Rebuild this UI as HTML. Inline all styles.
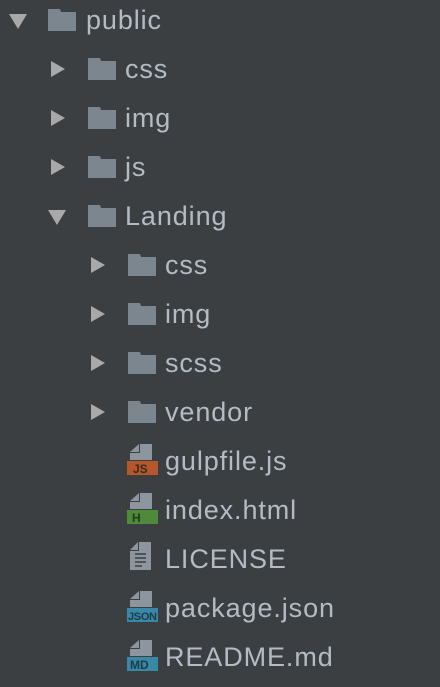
<!DOCTYPE html>
<html><head><style>
body{margin:0;width:440px;height:687px;background:#3c3f41;overflow:hidden;font-family:"Liberation Sans","DejaVu Sans",sans-serif;}
.r{position:absolute;height:49px;left:0;right:0;}
.t{position:absolute;font-size:27px;color:#b3bcc5;top:5px;letter-spacing:0.9px}
.tri{position:absolute;}
.fold{position:absolute;width:28px;height:22px}
</style></head><body>
<svg width="0" height="0" style="position:absolute"><defs>
<symbol id="fd" viewBox="0 0 28 22"><path d="M0 0H12L13 3H28V22H0Z" fill="#7b868e"/></symbol>
<symbol id="tr" viewBox="0 0 16 16"><path d="M1 0L15 8L1 16Z" fill="#a9a9a9"/></symbol>
<symbol id="td" viewBox="0 0 18 16"><path d="M0 1H18L9 16Z" fill="#a9a9a9"/></symbol>
<symbol id="pg" viewBox="0 0 22 16"><path d="M10 0H22V16H0V9H10Z" fill="#8d969e"/><path d="M0 8L9 0V8Z" fill="#8d969e"/></symbol>
</defs></svg>

<div class="r" style="top:0"><svg class="tri" style="left:9px;top:13px" width="18" height="16"><use href="#td"/></svg><svg class="fold" style="left:48px;top:9px" width="28" height="22"><use href="#fd"/></svg><span class="t" style="left:86px">public</span></div>
<div class="r" style="top:49px"><svg class="tri" style="left:50px;top:12px" width="16" height="16"><use href="#tr"/></svg><svg class="fold" style="left:88px;top:9px" width="28" height="22"><use href="#fd"/></svg><span class="t" style="left:125px">css</span></div>
<div class="r" style="top:98px"><svg class="tri" style="left:50px;top:12px" width="16" height="16"><use href="#tr"/></svg><svg class="fold" style="left:88px;top:9px" width="28" height="22"><use href="#fd"/></svg><span class="t" style="left:125px">img</span></div>
<div class="r" style="top:147px"><svg class="tri" style="left:50px;top:12px" width="16" height="16"><use href="#tr"/></svg><svg class="fold" style="left:88px;top:9px" width="28" height="22"><use href="#fd"/></svg><span class="t" style="left:125px">js</span></div>
<div class="r" style="top:196px"><svg class="tri" style="left:48px;top:13px" width="18" height="16"><use href="#td"/></svg><svg class="fold" style="left:88px;top:9px" width="28" height="22"><use href="#fd"/></svg><span class="t" style="left:125px">Landing</span></div>
<div class="r" style="top:245px"><svg class="tri" style="left:90px;top:12px" width="16" height="16"><use href="#tr"/></svg><svg class="fold" style="left:128px;top:9px" width="28" height="22"><use href="#fd"/></svg><span class="t" style="left:165px">css</span></div>
<div class="r" style="top:294px"><svg class="tri" style="left:90px;top:12px" width="16" height="16"><use href="#tr"/></svg><svg class="fold" style="left:128px;top:9px" width="28" height="22"><use href="#fd"/></svg><span class="t" style="left:165px">img</span></div>
<div class="r" style="top:343px"><svg class="tri" style="left:90px;top:12px" width="16" height="16"><use href="#tr"/></svg><svg class="fold" style="left:128px;top:9px" width="28" height="22"><use href="#fd"/></svg><span class="t" style="left:165px">scss</span></div>
<div class="r" style="top:392px"><svg class="tri" style="left:90px;top:12px" width="16" height="16"><use href="#tr"/></svg><svg class="fold" style="left:128px;top:9px" width="28" height="22"><use href="#fd"/></svg><span class="t" style="left:165px">vendor</span></div>

<div class="r" style="top:441px"><svg style="position:absolute;left:127px;top:3px" width="32" height="32"><use href="#pg" x="3" y="0" width="22" height="16"/><rect x="0" y="17" width="31" height="14" fill="#b4582c"/><text x="6" y="29" font-size="12" font-weight="bold" font-family="Liberation Sans" fill="#3c2a20">JS</text></svg><span class="t" style="left:165px">gulpfile.js</span></div>
<div class="r" style="top:490px"><svg style="position:absolute;left:127px;top:3px" width="32" height="32"><use href="#pg" x="3" y="0" width="22" height="16"/><rect x="0" y="17" width="31" height="14" fill="#4e8a3a"/><text x="5" y="29" font-size="12" font-weight="bold" font-family="Liberation Sans" fill="#233a1a">H</text></svg><span class="t" style="left:165px">index.html</span></div>
<div class="r" style="top:539px"><svg style="position:absolute;left:127px;top:3px" width="32" height="32"><path d="M12 0H24V28H3V9H12Z M3 8L11 0V8Z" fill="#8d969e"/><path d="M8 12H19M8 16H19M8 20H19M8 24H15" stroke="#3c3f41" stroke-width="1.5"/></svg><span class="t" style="left:165px">LICENSE</span></div>
<div class="r" style="top:588px"><svg style="position:absolute;left:127px;top:3px" width="32" height="32"><use href="#pg" x="3" y="0" width="22" height="16"/><rect x="0" y="17" width="31" height="14" fill="#3a88a8"/><text x="1" y="29" font-size="11" font-weight="bold" font-family="Liberation Sans" fill="#1d3a48" textLength="29">JSON</text></svg><span class="t" style="left:165px">package.json</span></div>
<div class="r" style="top:637px"><svg style="position:absolute;left:127px;top:3px" width="32" height="32"><use href="#pg" x="3" y="0" width="22" height="16"/><rect x="0" y="17" width="31" height="14" fill="#3a88a8"/><text x="3" y="29" font-size="12" font-weight="bold" font-family="Liberation Sans" fill="#1d3a48">MD</text></svg><span class="t" style="left:165px">README.md</span></div>
</body></html>
